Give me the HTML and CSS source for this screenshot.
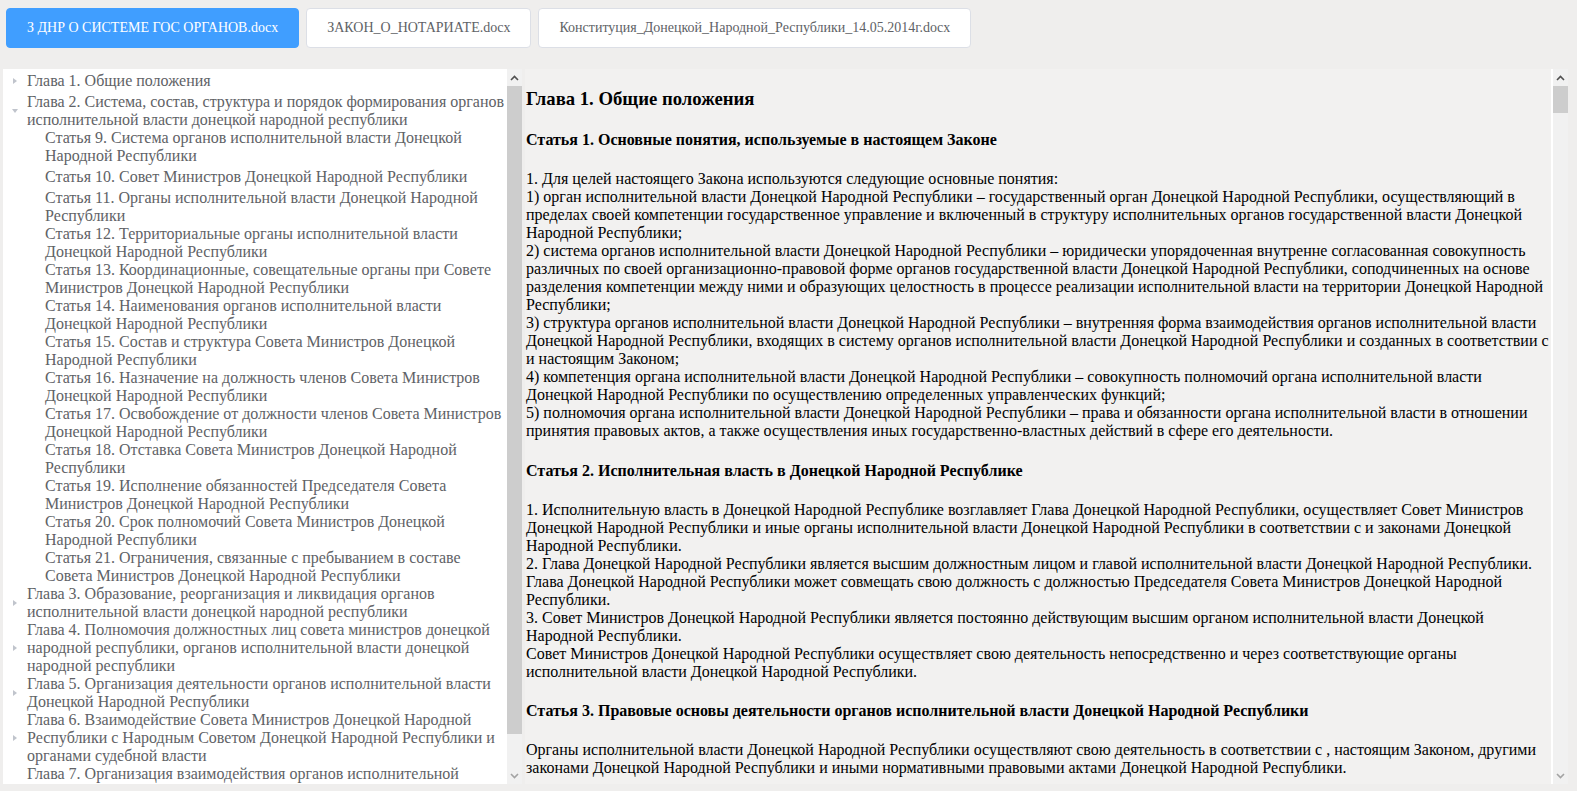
FILE: index.html
```html
<!DOCTYPE html>
<html lang="ru">
<head>
<meta charset="utf-8">
<title>Документы</title>
<link rel="stylesheet" href="styles.css">
</head>
<body>
<div class="tabs">
  <div class="tab tab-active">З ДНР О СИСТЕМЕ ГОС ОРГАНОВ.docx</div>
  <div class="tab">ЗАКОН_О_НОТАРИАТЕ.docx</div>
  <div class="tab">Конституция_Донецкой_Народной_Республики_14.05.2014г.docx</div>
</div>
<div class="panes">
  <div class="pane pane-tree">
    <div class="pane-body tree">
      <div class="node"><span class="caret caret-right"></span><span class="label">Глава 1. Общие положения</span></div>
      <div class="node"><span class="caret caret-down"></span><span class="label">Глава 2. Система, состав, структура и порядок формирования органов исполнительной власти донецкой народной республики</span></div>
      <div class="node node-child"><span class="caret caret-leaf"></span><span class="label">Статья 9. Система органов исполнительной власти Донецкой Народной Республики</span></div>
      <div class="node node-child"><span class="caret caret-leaf"></span><span class="label">Статья 10. Совет Министров Донецкой Народной Республики</span></div>
      <div class="node node-child"><span class="caret caret-leaf"></span><span class="label">Статья 11. Органы исполнительной власти Донецкой Народной Республики</span></div>
      <div class="node node-child"><span class="caret caret-leaf"></span><span class="label">Статья 12. Территориальные органы исполнительной власти Донецкой Народной Республики</span></div>
      <div class="node node-child"><span class="caret caret-leaf"></span><span class="label">Статья 13. Координационные, совещательные органы при Совете Министров Донецкой Народной Республики</span></div>
      <div class="node node-child"><span class="caret caret-leaf"></span><span class="label">Статья 14. Наименования органов исполнительной власти Донецкой Народной Республики</span></div>
      <div class="node node-child"><span class="caret caret-leaf"></span><span class="label">Статья 15. Состав и структура Совета Министров Донецкой Народной Республики</span></div>
      <div class="node node-child"><span class="caret caret-leaf"></span><span class="label">Статья 16. Назначение на должность членов Совета Министров Донецкой Народной Республики</span></div>
      <div class="node node-child"><span class="caret caret-leaf"></span><span class="label">Статья 17. Освобождение от должности членов Совета Министров Донецкой Народной Республики</span></div>
      <div class="node node-child"><span class="caret caret-leaf"></span><span class="label">Статья 18. Отставка Совета Министров Донецкой Народной Республики</span></div>
      <div class="node node-child"><span class="caret caret-leaf"></span><span class="label">Статья 19. Исполнение обязанностей Председателя Совета Министров Донецкой Народной Республики</span></div>
      <div class="node node-child"><span class="caret caret-leaf"></span><span class="label">Статья 20. Срок полномочий Совета Министров Донецкой Народной Республики</span></div>
      <div class="node node-child"><span class="caret caret-leaf"></span><span class="label">Статья 21. Ограничения, связанные с пребыванием в составе Совета Министров Донецкой Народной Республики</span></div>
      <div class="node"><span class="caret caret-right"></span><span class="label">Глава 3. Образование, реорганизация и ликвидация органов исполнительной власти донецкой народной республики</span></div>
      <div class="node"><span class="caret caret-right"></span><span class="label">Глава 4. Полномочия должностных лиц совета министров донецкой народной республики, органов исполнительной власти донецкой народной республики</span></div>
      <div class="node"><span class="caret caret-right"></span><span class="label">Глава 5. Организация деятельности органов исполнительной власти Донецкой Народной Республики</span></div>
      <div class="node"><span class="caret caret-right"></span><span class="label">Глава 6. Взаимодействие Совета Министров Донецкой Народной Республики с Народным Советом Донецкой Народной Республики и органами судебной власти</span></div>
      <div class="node"><span class="caret caret-right"></span><span class="label">Глава 7. Организация взаимодействия органов исполнительной власти Донецкой Народной Республики с органами местного самоуправления</span></div>
    </div>
    <div class="scrollbar scrollbar-tree">
      <div class="sb-btn"><svg class="sb-arrow" width="9" height="6" viewBox="0 0 9 6"><polyline points="1,5 4.5,1.5 8,5" fill="none" stroke="#505050" stroke-width="1.6"/></svg></div>
      <div class="sb-thumb sb-thumb-tree"></div>
      <div class="sb-fill"></div>
      <div class="sb-btn"><svg class="sb-arrow" width="9" height="6" viewBox="0 0 9 6"><polyline points="1,1 4.5,4.5 8,1" fill="none" stroke="#a3a3a3" stroke-width="1.6"/></svg></div>
    </div>
  </div>
  <div class="pane pane-doc">
    <div class="pane-body doc">
      <h3 class="doc-chapter">Глава 1. Общие положения</h3>
      <h4 class="doc-article">Статья 1. Основные понятия, используемые в настоящем Законе</h4>
      <p class="doc-text">1. Для целей настоящего Закона используются следующие основные понятия:<br>1) орган исполнительной власти Донецкой Народной Республики – государственный орган Донецкой Народной Республики, осуществляющий в пределах своей компетенции государственное управление и включенный в структуру исполнительных органов государственной власти Донецкой Народной Республики;<br>2) система органов исполнительной власти Донецкой Народной Республики – юридически упорядоченная внутренне согласованная совокупность различных по своей организационно-правовой форме органов государственной власти Донецкой Народной Республики, соподчиненных на основе разделения компетенции между ними и образующих целостность в процессе реализации исполнительной власти на территории Донецкой Народной Республики;<br>3) структура органов исполнительной власти Донецкой Народной Республики – внутренняя форма взаимодействия органов исполнительной власти Донецкой Народной Республики, входящих в систему органов исполнительной власти Донецкой Народной Республики и созданных в соответствии с и настоящим Законом;<br>4) компетенция органа исполнительной власти Донецкой Народной Республики – совокупность полномочий органа исполнительной власти Донецкой Народной Республики по осуществлению определенных управленческих функций;<br>5) полномочия органа исполнительной власти Донецкой Народной Республики – права и обязанности органа исполнительной власти в отношении принятия правовых актов, а также осуществления иных государственно-властных действий в сфере его деятельности.</p>
      <h4 class="doc-article">Статья 2. Исполнительная власть в Донецкой Народной Республике</h4>
      <p class="doc-text">1. Исполнительную власть в Донецкой Народной Республике возглавляет Глава Донецкой Народной Республики, осуществляет Совет Министров Донецкой Народной Республики и иные органы исполнительной власти Донецкой Народной Республики в соответствии с и законами Донецкой Народной Республики.<br>2. Глава Донецкой Народной Республики является высшим должностным лицом и главой исполнительной власти Донецкой Народной Республики.<br>Глава Донецкой Народной Республики может совмещать свою должность с должностью Председателя Совета Министров Донецкой Народной Республики.<br>3. Совет Министров Донецкой Народной Республики является постоянно действующим высшим органом исполнительной власти Донецкой Народной Республики.<br>Совет Министров Донецкой Народной Республики осуществляет свою деятельность непосредственно и через соответствующие органы исполнительной власти Донецкой Народной Республики.</p>
      <h4 class="doc-article">Статья 3. Правовые основы деятельности органов исполнительной власти Донецкой Народной Республики</h4>
      <p class="doc-text">Органы исполнительной власти Донецкой Народной Республики осуществляют свою деятельность в соответствии с , настоящим Законом, другими законами Донецкой Народной Республики и иными нормативными правовыми актами Донецкой Народной Республики.</p>
    </div>
    <div class="scrollbar">
      <div class="sb-btn"><svg class="sb-arrow" width="9" height="6" viewBox="0 0 9 6"><polyline points="1,5 4.5,1.5 8,5" fill="none" stroke="#505050" stroke-width="1.6"/></svg></div>
      <div class="sb-thumb sb-thumb-doc"></div>
      <div class="sb-fill"></div>
      <div class="sb-btn"><svg class="sb-arrow" width="9" height="6" viewBox="0 0 9 6"><polyline points="1,1 4.5,4.5 8,1" fill="none" stroke="#a3a3a3" stroke-width="1.6"/></svg></div>
    </div>
  </div>
</div>
</body>
</html>
```

FILE: styles.css
```css
html, body {
  margin: 0;
  padding: 0;
}
body {
  width: 1577px;
  height: 791px;
  overflow: hidden;
  background: #efeeed;
  font-family: "Liberation Serif", "Times New Roman", serif;
}
.tabs {
  display: flex;
  gap: 7px;
  padding: 8px 0 0 6px;
}
.tab {
  box-sizing: border-box;
  height: 40px;
  padding: 12px 20px;
  border: 1px solid #dcdfe6;
  border-radius: 4px;
  background: #fff;
  color: #606266;
  font-size: 14px;
  line-height: 14px;
  white-space: nowrap;
}
.tab-active {
  background: #409eff;
  border-color: #409eff;
  color: #fff;
}
.panes {
  display: flex;
  gap: 3px;
  padding: 21px 9px 0 3px;
  height: 715px;
}
.pane {
  display: flex;
  height: 715px;
}
.pane-tree {
  width: 519px;
  background: #fff;
}
.pane-doc {
  flex: 1;
  background: #f2f1f0;
}
.pane-body {
  flex: 1;
  min-width: 0;
  overflow: hidden;
}
.tree {
  font-size: 16px;
  line-height: 18px;
  color: #606266;
}
.node {
  display: flex;
  align-items: center;
  min-height: 24px;
}
.node-child {
  padding-left: 18px;
}
.caret {
  flex: none;
  width: 12px;
  height: 8px;
  margin: 0 6px;
  display: flex;
  align-items: center;
  justify-content: center;
}
.caret-right::before {
  content: "";
  border-left: 4px solid #c0c4cc;
  border-top: 3.5px solid transparent;
  border-bottom: 3.5px solid transparent;
}
.caret-down::before {
  content: "";
  border-top: 4px solid #c0c4cc;
  border-left: 3.5px solid transparent;
  border-right: 3.5px solid transparent;
}
.label {
  flex: 1;
  min-width: 0;
}
.scrollbar {
  flex: none;
  width: 15px;
  border-left: 2px solid #fff;
  background: #f1f1f1;
  display: flex;
  flex-direction: column;
}
.scrollbar-tree {
  border-left: 0;
}
.sb-btn {
  height: 17px;
  display: flex;
  align-items: center;
  justify-content: center;
}
.sb-thumb {
  background: #cdcdcd;
}
.sb-thumb-tree {
  height: 648px;
}
.sb-thumb-doc {
  height: 27px;
}
.sb-fill {
  flex: 1;
}
.doc {
  padding-left: 1px;
  color: #000;
  font-size: 16px;
}
.doc-chapter {
  font-size: 18.72px;
  margin: 18.72px 0;
}
.doc-article {
  font-size: 16px;
  margin: 21.28px 0;
}
.doc-text {
  margin: 0;
  line-height: 18px;
}
```
